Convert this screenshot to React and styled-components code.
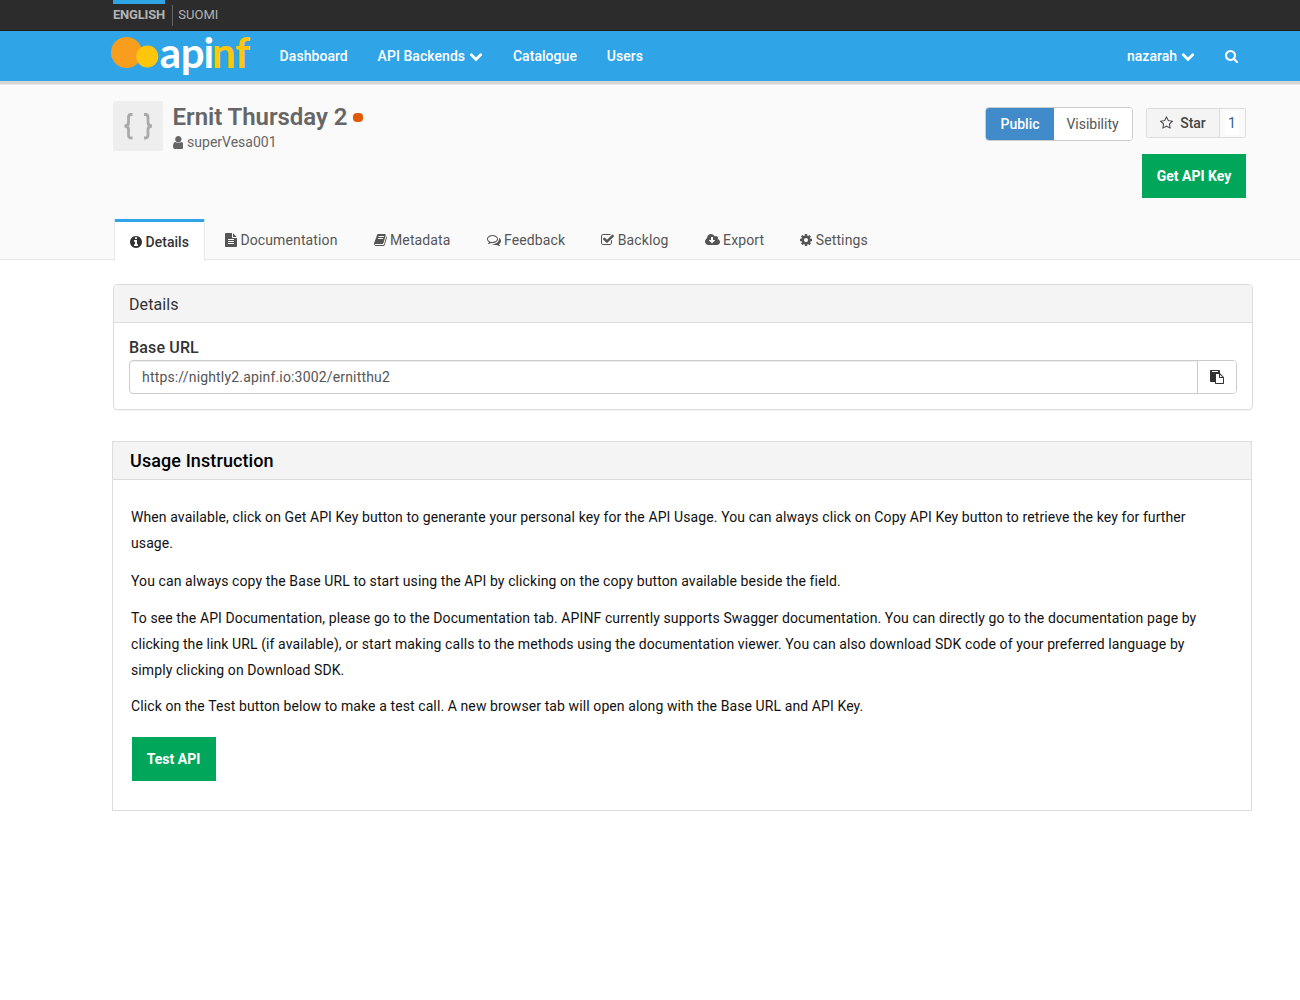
import React from "react";
import styled, { createGlobalStyle } from "styled-components";

const Global = createGlobalStyle`
  body { margin: 0; background: #fff; }
  *, *::before, *::after { box-sizing: border-box; }
  body, button, input { font-family: Roboto, "Liberation Sans", sans-serif; font-size: 14px; line-height: 20px; color: #333; }
`;

const glyphs = {
  info: [128, 1536, "M1152 1376v-160q0-14-9-23t-23-9h-96v-512q0-14-9-23t-23-9h-320q-14 0-23 9t-9 23v160q0 14 9 23t23 9h96v320h-96q-14 0-23 9t-9 23v160q0 14 9 23t23 9h448q14 0 23-9t9-23zm-128-896v-160q0-14-9-23t-23-9h-192q-14 0-23 9t-9 23v160q0 14 9 23t23 9h192q14 0 23-9t9-23zm640 416q0 209-103 385.5t-279.5 279.5-385.5 103-385.5-103-279.5-279.5-103-385.5 103-385.5 279.5-279.5 385.5-103 385.5 103 279.5 279.5 103 385.5z"],
  file: [128, 1536, "M1596 476q14 14 28 36h-472v-472q22 14 36 28zm-476 164h544v1056q0 40-28 68t-68 28h-1344q-40 0-68-28t-28-68v-1600q0-40 28-68t68-28h800v544q0 40 28 68t68 28zm160 736v-64q0-14-9-23t-23-9h-704q-14 0-23 9t-9 23v64q0 14 9 23t23 9h704q14 0 23-9t9-23zm0-256v-64q0-14-9-23t-23-9h-704q-14 0-23 9t-9 23v64q0 14 9 23t23 9h704q14 0 23-9t9-23zm0-256v-64q0-14-9-23t-23-9h-704q-14 0-23 9t-9 23v64q0 14 9 23t23 9h704q14 0 23-9t9-23z"],
  book: [64, 1664, "M1703 478q40 57 18 129l-275 906q-19 64-76.5 107.5t-122.5 43.5h-923q-77 0-148.5-53.5t-99.5-131.5q-24-67-2-127 0-4 3-27t4-37q1-8-3-21.5t-3-19.5q2-11 8-21t16.5-23.5 16.5-23.5q23-38 45-91.5t30-91.5q3-10 .5-30t-.5-28q3-11 17-28t17-23q21-36 42-92t25-90q1-9-2.5-32t.5-28q4-13 22-30.5t22-22.5q19-26 42.5-84.5t27.5-96.5q1-8-3-25.5t-2-26.5q2-8 9-18t18-23 17-21q8-12 16.5-30.5t15-35 16-36 19.5-32 26.5-23.5 36-11.5 47.5 5.5l-1 3q38-9 51-9h761q74 0 114 56t18 130l-274 906q-36 119-71.5 153.5t-128.5 34.5h-869q-27 0-38 15-11 16-1 43 24 70 144 70h923q29 0 56-15.5t35-41.5l300-987q7-22 5-57 38 15 59 43zm-1064 2q-4 13 2 22.5t20 9.5h608q13 0 25.5-9.5t16.5-22.5l21-64q4-13-2-22.5t-20-9.5h-608q-13 0-25.5 9.5t-16.5 22.5zm-83 256q-4 13 2 22.5t20 9.5h608q13 0 25.5-9.5t16.5-22.5l21-64q4-13-2-22.5t-20-9.5h-608q-13 0-25.5 9.5t-16.5 22.5z"],
  comments: [0, 1792, "M704 384q-153 0-286 52t-211.5 141-78.5 191q0 82 53 158t149 132l97 56-35 84q34-20 62-39l44-31 53 10q78 14 153 14 153 0 286-52t211.5-141 78.5-191-78.5-191-211.5-141-286-52zm0-128q191 0 353.5 68.5t256.5 186.5 94 257-94 257-256.5 186.5-353.5 68.5q-86 0-176-16-124 88-278 128-36 9-86 16h-3q-11 0-20.5-8t-11.5-21q-1-3-1-6.5t.5-6.5 2-6l2.5-5 3.5-5.5 4-5 4.5-5 4-4.5q5-6 23-25t26-29.5 22.5-29 25-38.5 20.5-44q-124-72-195-177t-71-224q0-139 94-257t256.5-186.5 353.5-68.5zm822 1169q10 24 20.5 44t25 38.5 22.5 29 26 29.5 23 25q1 1 4 4.5t4.5 5 4 5 3.5 5.5l2.5 5 2 6 .5 6.5-1 6.5q-3 14-13 22t-22 7q-50-7-86-16-154-40-278-128-90 16-176 16-271 0-472-132 58 4 88 4 161 0 309-45t264-129q125-92 192-212t67-254q0-77-23-152 129 71 204 178t75 230q0 120-71 224.5t-195 176.5z"],
  check: [64, 1664, "M1472 930v318q0 119-84.5 203.5t-203.5 84.5h-832q-119 0-203.5-84.5t-84.5-203.5v-832q0-119 84.5-203.5t203.5-84.5h832q63 0 117 25 15 7 18 23 3 17-9 29l-49 49q-10 10-23 10-3 0-9-2-23-6-45-6h-832q-66 0-113 47t-47 113v832q0 66 47 113t113 47h832q66 0 113-47t47-113v-254q0-13 9-22l64-64q10-10 23-10 6 0 12 3 20 8 20 29zm231-489l-814 814q-24 24-57 24t-57-24l-430-430q-24-24-24-57t24-57l110-110q24-24 57-24t57 24l263 263 647-647q24-24 57-24t57 24l110 110q24 24 24 57t-24 57z"],
  cloud: [-64, 1920, "M1216 928q0-14-9-23t-23-9h-224v-352q0-13-9.5-22.5t-22.5-9.5h-192q-13 0-22.5 9.5t-9.5 22.5v352h-224q-13 0-22.5 9.5t-9.5 22.5q0 14 9 23l352 352q9 9 23 9t23-9l351-351q10-12 10-24zm640 224q0 159-112.5 271.5t-271.5 112.5h-1088q-185 0-316.5-131.5t-131.5-316.5q0-130 70-240t188-165q-2-30-2-43 0-212 150-362t362-150q156 0 285.5 87t188.5 231q71-62 166-62 106 0 181 75t75 181q0 76-41 138 130 31 213.5 135.5t83.5 238.5z"],
  cog: [128, 1536, "M1152 896q0-106-75-181t-181-75-181 75-75 181 75 181 181 75 181-75 75-181zm512-109v222q0 12-8 23t-20 13l-185 28q-19 54-39 91 35 50 107 138 10 12 10 25t-9 23q-27 37-99 108t-94 71q-12 0-26-9l-138-108q-44 23-91 38-16 136-29 186-7 28-36 28h-222q-14 0-24.5-8.5t-11.5-21.5l-28-184q-49-16-90-37l-141 107q-10 9-25 9-14 0-25-11-126-114-165-168-7-10-7-23 0-12 8-23 15-21 51-66.5t54-70.5q-27-50-41-99l-183-27q-13-2-21-12.5t-8-23.5v-222q0-12 8-23t19-13l186-28q14-46 39-92-40-57-107-138-10-12-10-24 0-10 9-23 26-36 98.5-107.5t94.5-71.5q13 0 26 10l138 107q44-23 91-38 16-136 29-186 7-28 36-28h222q14 0 24.5 8.5t11.5 21.5l28 184q49 16 90 37l142-107q9-9 24-9 13 0 25 10 129 119 165 170 7 8 7 22 0 12-8 23-15 21-51 66.5t-54 70.5q26 50 41 98l183 28q13 2 21 12.5t8 23.5z"],
  search: [64, 1664, "M1216 832q0-185-131.5-316.5t-316.5-131.5-316.5 131.5-131.5 316.5 131.5 316.5 316.5 131.5 316.5-131.5 131.5-316.5zm512 832q0 52-38 90t-90 38q-54 0-90-38l-343-342q-179 124-399 124-143 0-273.5-55.5t-225-150-150-225-55.5-273.5 55.5-273.5 150-225 225-150 273.5-55.5 273.5 55.5 225 150 150 225 55.5 273.5q0 220-124 399l343 343q37 37 37 90z"],
  star: [64, 1664, "M1201 1004l306-297-422-62-189-382-189 382-422 62 306 297-73 421 378-199 377 199zm527-357q0 22-26 48l-363 354 86 500q1 7 1 20 0 50-41 50-19 0-40-12l-449-236-449 236q-22 12-40 12-21 0-31.5-14.5t-10.5-35.5q0-6 2-20l86-500-364-354q-25-27-25-48 0-37 56-46l502-73 225-455q19-41 49-41t49 41l225 455 502 73q56 9 56 46z"],
  user: [256, 1280, "M1536 1399q0 109-62.5 187t-150.5 78h-854q-88 0-150.5-78t-62.5-187q0-85 8.5-160.5t31.5-152 58.5-131 94-89 134.5-34.5q131 128 313 128t313-128q76 0 134.5 34.5t94 89 58.5 131 31.5 152 8.5 160.5zm-256-887q0 159-112.5 271.5t-271.5 112.5-271.5-112.5-112.5-271.5 112.5-271.5 271.5-112.5 271.5 112.5 112.5 271.5z"],
  chevron: [0, 1792, "M1683 808l-742 741q-19 19-45 19t-45-19l-742-741q-19-19-19-45.500t19-45.500l166-165q19-19 45-19t45 19l531 531 531-531q19-19 45-19t45 19l166 165q19 19 19 45.500t-19 45.500z"],
  paste: [0, 1792, "M768 1664h896v-640h-416q-40 0-68-28t-28-68v-416h-384v1152zm256-1440v-64q0-13-9.500-22.500t-22.500-9.500h-704q-13 0-22.500 9.500t-9.500 22.500v64q0 13 9.500 22.500t22.500 9.500h704q13 0 22.500-9.500t9.500-22.500zm256 672h299l-299-299v299zm512 128v672q0 40-28 68t-68 28h-960q-40 0-68-28t-28-68v-160h-544q-40 0-68-28t-28-68v-1344q0-40 28-68t68-28h1088q40 0 68 28t28 68v328q21 13 36 28l408 408q28 28 48 76t20 88z"],
};

const Svg = styled.svg`
  display: block;
  flex: none;
  fill: currentColor;
`;

function Icon({ name, size = 14 }) {
  const [x, w, d] = glyphs[name];
  return (
    <Svg width={(w * size) / 1792} height={size} viewBox={`${x} 0 ${w} 1792`} aria-hidden="true">
      <path d={d} />
    </Svg>
  );
}

const TopBar = styled.div`
  height: 31px;
  padding-left: 113px;
  display: flex;
  align-items: flex-start;
  background: #2c2c2c;
  border-bottom: 1px solid #1f1f1f;
`;

const Language = styled.a`
  height: 25px;
  padding-top: ${(p) => (p.$active ? 1 : 5)}px;
  border-top: ${(p) => (p.$active ? "4px solid #2fa4e7" : "0")};
  font-size: 13px;
  font-weight: ${(p) => (p.$active ? 700 : 400)};
  letter-spacing: ${(p) => (p.$active ? "-0.2px" : "0")};
  color: #b3b3b3;
`;

const Divider = styled.span`
  width: 1px;
  height: 21px;
  margin: 5px 5.4px 0 7px;
  background: #666;
`;

const NavBar = styled.nav`
  height: 53px;
  padding-left: 111px;
  display: flex;
  align-items: flex-start;
  background: #2fa4e7;
  border-bottom: 3px solid #d5d5d5;
  color: #fff;
`;

const Logo = styled.a`
  width: 168.6px;
  height: 50px;
`;

const LogoMark = styled.svg`
  display: block;
  overflow: visible;
  font-family: Lato, sans-serif;
  font-size: 42px;
  font-weight: 700;
`;

const Menu = styled.div`
  display: flex;
  gap: 29.8px;
  padding-top: 15px;
`;

const MenuItem = styled.a`
  display: flex;
  align-items: center;
  gap: 4px;
  height: 20px;
  font-weight: 500;
  letter-spacing: 0.05px;
  color: #fff;
`;

const UserMenu = styled(Menu)`
  margin-left: auto;
  padding-right: 62px;
`;

const Header = styled.header`
  height: 176px;
  padding: 16px 54px 0 113px;
  display: flex;
  flex-direction: column;
  justify-content: space-between;
  background: #fafafa;
  border-top: 1px solid #e8e8e8;
  border-bottom: 1px solid #e7e7e7;
`;

const HeaderTop = styled.div`
  display: flex;
`;

const Thumb = styled.div`
  width: 50px;
  height: 50px;
  border-radius: 2px;
  background: #eee;
`;

const Braces = styled.svg`
  display: block;
  fill: none;
  stroke: #aaa;
  stroke-width: 2.8px;
`;

const Identity = styled.div`
  margin-left: 9.6px;
`;

const Title = styled.h1`
  display: flex;
  align-items: center;
  margin: 0 0 -2px;
  font-size: 24px;
  font-weight: 600;
  line-height: 33px;
  letter-spacing: -0.05px;
  color: #666;
`;

const StatusDot = styled.span`
  width: 10px;
  height: 9px;
  margin: 0 0 0 5.600px;
  border-radius: 4px;
  background: #e05a00;
`;

const Owner = styled.div`
  display: flex;
  align-items: center;
  gap: 3.8px;
  color: #666;
`;

const Actions = styled.div`
  margin-left: auto;
  display: flex;
  flex-direction: column;
  align-items: flex-end;
  gap: 13px;
`;

const ActionRow = styled.div`
  display: flex;
  align-items: flex-start;
  gap: 13px;
  padding-top: 6px;
`;

const Group = styled.div`
  display: flex;
  height: ${(p) => p.$h}px;
  margin-top: ${(p) => p.$drop || 0}px;
  border: 1px solid ${(p) => p.$line};
  border-radius: ${(p) => p.$r}px;
  overflow: hidden;
  background: #fff;
`;

const Segment = styled.button`
  display: flex;
  align-items: center;
  justify-content: center;
  gap: 7px;
  width: ${(p) => p.$w}px;
  padding: 0 ${(p) => p.$nudge || 0}px 0 0;
  border: 0;
  border-left: ${(p) => (p.$split ? "1px solid #ddd" : "0")};
  background: ${(p) => p.$bg || "#fff"};
  color: ${(p) => p.$fg || "#555"};
  font-weight: ${(p) => p.$weight || 400};
`;

const Count = styled.span`
  width: 14px;
  padding: 2px 0;
  background: #fff;
  text-align: center;
`;

const GreenButton = styled.button`
  display: block;
  height: 44px;
  width: ${(p) => p.$w}px;
  margin-left: ${(p) => p.$indent || 0}px;
  padding: 0 ${(p) => p.$indent || 0}px 1px 0;
  border: 0;
  background: #00a65a;
  color: #fff;
  font-weight: 700;
`;

const Tabs = styled.div`
  display: flex;
  align-items: flex-start;
  margin: 0 0 -2px 1px;
`;

const Tab = styled.a`
  display: flex;
  align-items: center;
  gap: 3.5px;
  height: ${(p) => (p.$active ? 42 : 38)}px;
  margin-right: ${(p) => (p.$active ? 2 : 0)}px;
  padding: 0 ${(p) => (p.$active ? 15 : 17)}px;
  border: 1px solid ${(p) => (p.$active ? "#e7e7e7" : "transparent")};
  border-top: 3px solid ${(p) => (p.$active ? "#2fa4e7" : "transparent")};
  border-bottom: 0;
  background: ${(p) => (p.$active ? "#fff" : "transparent")};
  border-radius: 2px 2px 0 0;
  font-weight: ${(p) => (p.$active ? 500 : 400)};
  letter-spacing: ${(p) => (p.$active ? 0.03 : 0.12)}px;
  color: ${(p) => (p.$active ? "#333" : "#555")};
`;

const Main = styled.main`
  display: flex;
  flex-direction: column;
  gap: 31px;
  padding: 24px 48px 0 112px;
`;

const Panel = styled.section`
  margin: ${(p) => (p.$flat ? "0" : "0 -1px 0 1px")};
  border: 1px solid #ddd;
  border-radius: ${(p) => (p.$flat ? 0 : 4)}px;
  box-shadow: ${(p) => (p.$flat ? "none" : "0 1px 1px rgba(0, 0, 0, 0.05)")};
  overflow: hidden;
`;

const PanelTitle = styled.h2`
  margin: 0;
  height: 38px;
  padding: 0 ${(p) => (p.$big ? 17 : 15)}px;
  border-bottom: 1px solid #ddd;
  background: #f4f4f4;
  font-size: ${(p) => (p.$big ? 18 : 16)}px;
  font-weight: ${(p) => (p.$big ? 500 : 400)};
  line-height: ${(p) => (p.$big ? 38 : 39)}px;
  letter-spacing: 0.1px;
  color: ${(p) => (p.$big ? "#000" : "#333")};
`;

const UrlBody = styled.div`
  padding: 15px;
`;

const Label = styled.label`
  display: block;
  margin-bottom: 2px;
  font-size: 16px;
  font-weight: 500;
  letter-spacing: 0.15px;
`;

const Field = styled.div`
  display: flex;
  height: 34px;
  border: 1px solid #ccc;
  border-radius: 4px;
  box-shadow: inset 0 1px 1px rgba(0, 0, 0, 0.075);
`;

const Url = styled.span`
  flex: 1;
  padding: 6px 12px;
  letter-spacing: 0.17px;
  color: #555;
`;

const Copy = styled.button`
  display: flex;
  align-items: center;
  justify-content: center;
  width: 39px;
  padding: 0;
  border: 0;
  border-left: 1px solid #ccc;
  border-radius: 0 3px 3px 0;
  background: #fff;
`;

const Usage = styled.div`
  height: 330px;
  padding: 24px 18px;
`;

const Para = styled.p`
  margin: 0 0 ${(p) => p.$gap}px;
  line-height: 26px;
  letter-spacing: 0.097px;
  color: #111;
  white-space: nowrap;
`;

export default function App() {
  return (
    <>
      <Global />
      <TopBar>
        <Language $active>ENGLISH</Language>
        <Divider />
        <Language>SUOMI</Language>
      </TopBar>
      <NavBar>
        <Logo>
          <LogoMark width="142" height="50" viewBox="0 0 142 50">
            <circle cx="15.500" cy="21.500" r="15.500" fill="#f99d1c" />
            <circle cx="36.300" cy="25.500" r="11" fill="#ffc60b" />
            <text x="48.800 69.800 92.500" y="36.800" fill="#fff">api</text>
            <text x="101 124" y="36.800" fill="#ffc60b">nf</text>
          </LogoMark>
        </Logo>
        <Menu>
          <MenuItem>Dashboard</MenuItem>
          <MenuItem>API Backends <Icon name="chevron" /></MenuItem>
          <MenuItem>Catalogue</MenuItem>
          <MenuItem>Users</MenuItem>
        </Menu>
        <UserMenu>
          <MenuItem>nazarah <Icon name="chevron" /></MenuItem>
          <MenuItem><Icon name="search" /></MenuItem>
        </UserMenu>
      </NavBar>
      <Header>
        <HeaderTop>
          <Thumb>
            <Braces width="50" height="50" viewBox="0 0 50 50">
              <path d="M19.500 13.500H18Q15.500 13.500 15.500 16.500V21.500Q15.500 25 11.500 25Q15.500 25 15.500 28.500V34Q15.500 37 18 37H19.500" />
              <path d="M31 13.500H32.500Q35 13.500 35 16.500V21.500Q35 25 39 25Q35 25 35 28.500V34Q35 37 32.500 37H31" />
            </Braces>
          </Thumb>
          <Identity>
            <Title>Ernit Thursday 2<StatusDot /></Title>
            <Owner><Icon name="user" size={15} />superVesa001</Owner>
          </Identity>
          <Actions>
            <ActionRow>
              <Group $h={34} $line="#ccc" $r={4}>
                <Segment $w={68} $bg="#428bca" $fg="#fff" $weight={500}>Public</Segment>
                <Segment $w={78} $nudge={1}>Visibility</Segment>
              </Group>
              <Group $h={30} $drop={1} $line="#ddd" $r={2}>
                <Segment $w={72} $bg="#f4f4f4" $fg="#444" $weight={500}><Icon name="star" />Star</Segment>
                <Segment $w={26} $split $nudge={1} $bg="#fafafa" $fg="#31608f"><Count>1</Count></Segment>
              </Group>
            </ActionRow>
            <GreenButton $w={104}>Get API Key</GreenButton>
          </Actions>
        </HeaderTop>
        <Tabs>
          <Tab $active><Icon name="info" />Details</Tab>
          <Tab><Icon name="file" />Documentation</Tab>
          <Tab><Icon name="book" />Metadata</Tab>
          <Tab><Icon name="comments" />Feedback</Tab>
          <Tab><Icon name="check" />Backlog</Tab>
          <Tab><Icon name="cloud" />Export</Tab>
          <Tab><Icon name="cog" />Settings</Tab>
        </Tabs>
      </Header>
      <Main>
        <Panel>
          <PanelTitle>Details</PanelTitle>
          <UrlBody>
            <Label>Base URL</Label>
            <Field>
              <Url>https://nightly2.apinf.io:3002/ernitthu2</Url>
              <Copy aria-label="Copy"><Icon name="paste" /></Copy>
            </Field>
          </UrlBody>
        </Panel>
        <Panel $flat>
          <PanelTitle $big>Usage Instruction</PanelTitle>
          <Usage>
            <Para $gap={12}>When available, click on Get API Key button to generante your personal key for the API Usage. You can always click on Copy API Key button to retrieve the key for further<br />usage.</Para>
            <Para $gap={11}>You can always copy the Base URL to start using the API by clicking on the copy button available beside the field.</Para>
            <Para $gap={10}>To see the API Documentation, please go to the Documentation tab. APINF currently supports Swagger documentation. You can directly go to the documentation page by<br />clicking the link URL (if available), or start making calls to the methods using the documentation viewer. You can also download SDK code of your preferred language by<br />simply clicking on Download SDK.</Para>
            <Para $gap={18}>Click on the Test button below to make a test call. A new browser tab will open along with the Base URL and API Key.</Para>
            <GreenButton $w={84} $indent={1}>Test API</GreenButton>
          </Usage>
        </Panel>
      </Main>
    </>
  );
}
